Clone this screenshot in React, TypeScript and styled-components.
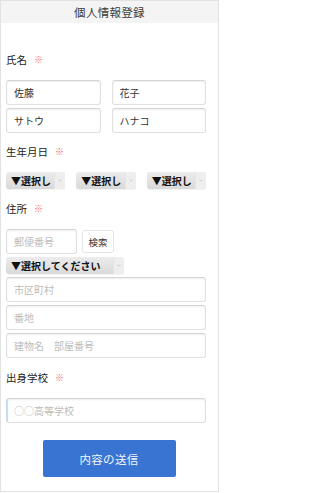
import React from "react";
import styled, { createGlobalStyle } from "styled-components";

const GlobalStyle = createGlobalStyle`
  html, body {
    margin: 0;
    padding: 0;
    background: #ffffff;
  }
  * {
    box-sizing: border-box;
  }
`;

const font = `"Noto Sans CJK JP", "Noto Sans", sans-serif`;

const Frame = styled.div`
  width: 219px;
  height: 492px;
  border: 1px solid #e2e2e2;
  background: #fff;
  font-family: ${font};
  color: #333;
`;

const Header = styled.div`
  height: 22px;
  background: #f4f4f4;
  display: flex;
  align-items: center;
  justify-content: center;
  font-size: 11.5px;
  color: #3a3a3a;
  letter-spacing: 0.3px;
`;

const Form = styled.form`
  padding: 30px 12px 0 5px;
  display: flex;
  flex-direction: column;
`;

const Label = styled.div<{ $top?: number }>`
  height: 14px;
  line-height: 14px;
  font-size: 10.5px;
  color: #222;
  margin-top: ${(p) => p.$top ?? 0}px;
  margin-bottom: 13px;
  display: flex;
  align-items: center;
`;

const Req = styled.span`
  color: #f36a6a;
  margin-left: 7px;
  font-size: 9px;
`;

const Grid = styled.div<{ $cols: number; $gap: number }>`
  display: grid;
  grid-template-columns: repeat(${(p) => p.$cols}, 1fr);
  column-gap: ${(p) => p.$gap}px;
  row-gap: 3px;
`;

const Stack = styled.div<{ $gap: number }>`
  display: flex;
  flex-direction: column;
  gap: ${(p) => p.$gap}px;
`;

const Input = styled.input<{ $w?: number; $focus?: boolean }>`
  width: ${(p) => (p.$w ? `${p.$w}px` : "100%")};
  height: 25px;
  border: 1px solid #e0e0e0;
  border-top-color: #d4d4d4;
  ${(p) => (p.$focus ? "border-left: 2px solid #c4dcf6;" : "")}
  border-radius: 3px;
  box-shadow: inset 0 1px 2px rgba(0, 0, 0, 0.07);
  padding: 0 0 0 ${(p) => (p.$focus ? 6 : 7)}px;
  font-family: ${font};
  font-size: 10px;
  color: #333;
  background: #fff;
  outline: none;
  &::placeholder {
    color: #bcbcbc;
  }
`;

const Row = styled.div`
  display: flex;
  align-items: center;
  gap: 5px;
`;

const SearchButton = styled.button`
  width: 32px;
  height: 23px;
  border: 1px solid #e4e4e4;
  border-radius: 3px;
  background: #fff;
  font-family: ${font};
  font-size: 9.5px;
  color: #333;
  padding: 0;
`;

const Select = styled.div<{ $w?: number }>`
  width: ${(p) => (p.$w ? `${p.$w}px` : "100%")};
  height: 17px;
  display: flex;
  border-radius: 3px;
  overflow: hidden;
  background: linear-gradient(#ececec, #d9d9d9);
  box-shadow: 0 1px 1px rgba(0, 0, 0, 0.06);
`;

const SelectText = styled.span`
  flex: 1;
  min-width: 0;
  white-space: nowrap;
  padding-left: 5px;
  font-size: 10px;
  font-weight: 700;
  line-height: 17px;
  color: #111;
`;

const SelectArrow = styled.span`
  width: 11px;
  flex: none;
  background: #eeeeee;
  border-left: 1px solid #e4e4e4;
  display: flex;
  align-items: center;
  justify-content: center;
`;

const Chevron = () => (
  <svg width="4" height="3" viewBox="0 0 4 3">
    <path d="M0.5 0.5 L2 2.2 L3.5 0.5" fill="none" stroke="#c4c4c4" strokeWidth="0.8" />
  </svg>
);

const Submit = styled.button`
  align-self: center;
  margin: 17px 0 0 6px;
  width: 133px;
  height: 37px;
  border: none;
  border-radius: 2px;
  background: #3a74d2;
  color: #f2f6fc;
  font-family: ${font};
  font-size: 11.5px;
  letter-spacing: 0.3px;
`;

const Dropdown = ({ text, w }: { text: string; w?: number }) => (
  <Select $w={w}>
    <SelectText>{text}</SelectText>
    <SelectArrow>
      <Chevron />
    </SelectArrow>
  </Select>
);

export default function App() {
  return (
    <>
      <GlobalStyle />
      <Frame>
        <Header>個人情報登録</Header>
        <Form onSubmit={(e) => e.preventDefault()}>
          <Label>
            氏名<Req>※</Req>
          </Label>
          <Grid $cols={2} $gap={11}>
            <Input defaultValue="佐藤" />
            <Input defaultValue="花子" />
            <Input defaultValue="サトウ" />
            <Input defaultValue="ハナコ" />
          </Grid>

          <Label $top={12}>
            生年月日<Req>※</Req>
          </Label>
          <Grid $cols={3} $gap={11}>
            <Dropdown text="▼選択し" />
            <Dropdown text="▼選択し" />
            <Dropdown text="▼選択し" />
          </Grid>

          <Label $top={13}>
            住所<Req>※</Req>
          </Label>
          <Stack $gap={3}>
            <Row>
              <Input $w={71} placeholder="郵便番号" />
              <SearchButton type="button">検索</SearchButton>
            </Row>
            <Dropdown text="▼選択してください" w={118} />
            <Input placeholder="市区町村" />
            <Input placeholder="番地" />
            <Input placeholder="建物名　部屋番号" />
          </Stack>

          <Label $top={13}>
            出身学校<Req>※</Req>
          </Label>
          <Input $focus placeholder="○○高等学校" />

          <Submit type="submit">内容の送信</Submit>
        </Form>
      </Frame>
    </>
  );
}
